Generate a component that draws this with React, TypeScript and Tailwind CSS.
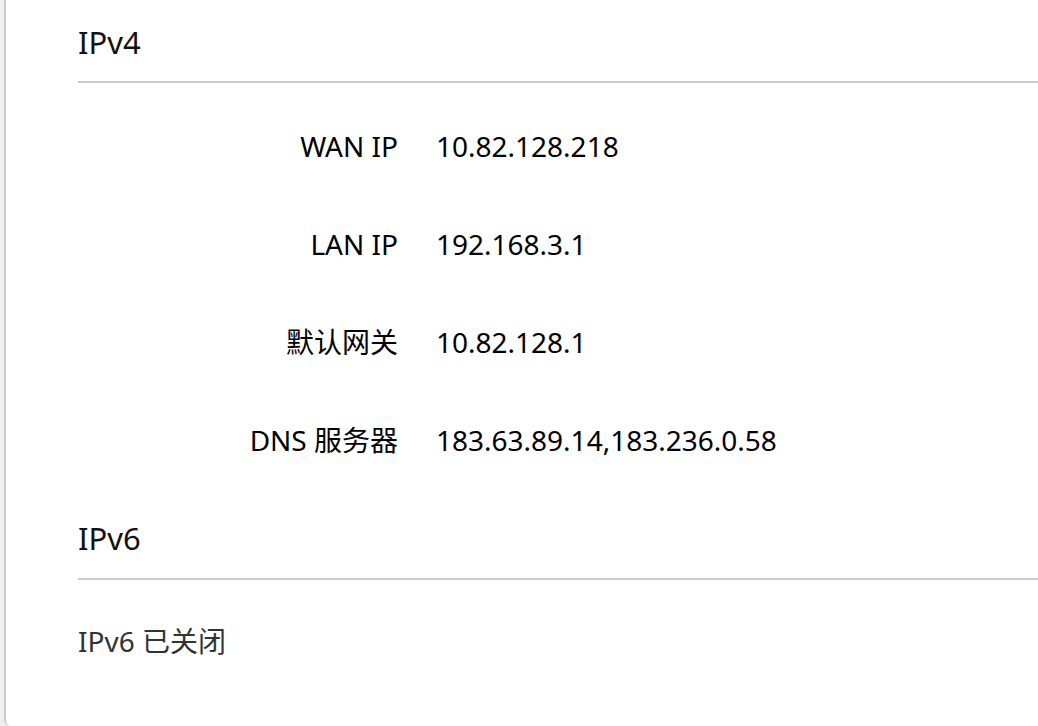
import React from "react";

const rows: [string, string][] = [
  ["WAN IP", "10.82.128.218"],
  ["LAN IP", "192.168.3.1"],
  ["默认网关", "10.82.128.1"],
  ["DNS 服务器", "183.63.89.14,183.236.0.58"],
];

export default function App() {
  return (
    <div className="min-h-[726px] w-[1038px] bg-[#f0f0f0] pl-[4px] font-['Noto_Sans','Noto_Sans_CJK_SC',sans-serif] text-black">
      <div className="min-h-[726px] bg-white border-l-2 border-[#cccccc] rounded-bl-[6px] pl-[72px]">
        <div className="pt-[22px] pb-[19px] border-b-2 border-[#cccccc]">
          <h2 className="text-[31px] leading-[40px] text-[#111]">IPv4</h2>
        </div>
        <div className="pt-[14px]">
          {rows.map(([k, v]) => (
            <div key={k} className="flex h-[98px] items-center text-[28px]">
              <div className="w-[320px] text-right">{k}</div>
              <div className="ml-[38px]">{v}</div>
            </div>
          ))}
        </div>
        <div className="pt-[29px] pb-[20px] border-b-2 border-[#cccccc]">
          <h2 className="text-[31px] leading-[40px] text-[#111]">IPv6</h2>
        </div>
        <div className="mt-[41px] text-[28px] leading-[40px] text-[#333]">IPv6 已关闭</div>
      </div>
    </div>
  );
}
